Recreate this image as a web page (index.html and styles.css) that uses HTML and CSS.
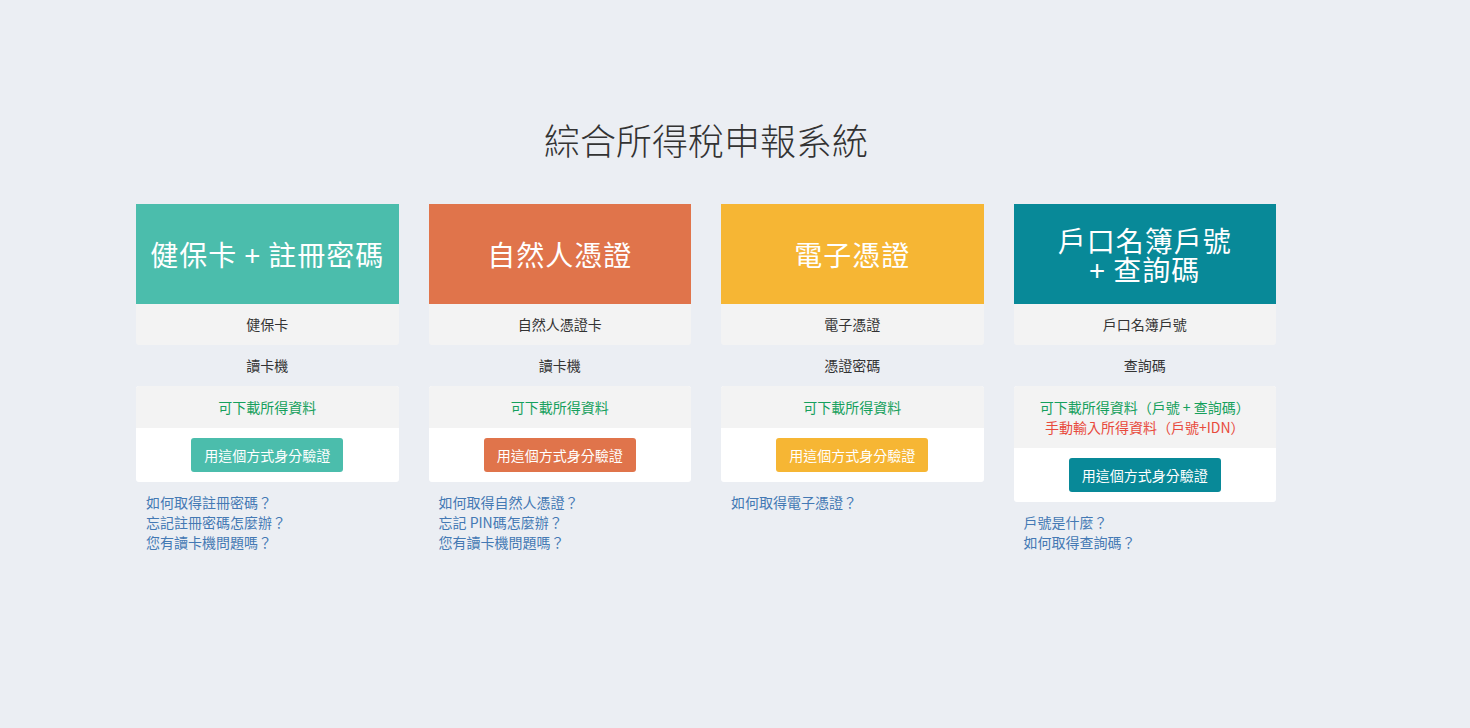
FILE: index.html
```html
<!DOCTYPE html>
<html lang="zh-Hant">
<head>
    <meta charset="UTF-8">
    <meta name="viewport" content="width=device-width, initial-scale=1.0">
    <title>綜合所得稅申報系統</title>
    <link rel="stylesheet" href="styles.css">
</head>
<body>
    <div class="container">
        <h1 class="page-title">綜合所得稅申報系統</h1>

        <div class="methods">
            <!-- 健保卡 -->
            <div class="method">
                <div class="card">
                    <div class="card-head head-nhi">健保卡 + 註冊密碼</div>
                    <div class="item item-gray">健保卡</div>
                    <div class="item">讀卡機</div>
                    <div class="panel">
                        <div class="item item-gray">
                            <span class="ok">可下載所得資料</span>
                        </div>
                        <div class="panel-foot">
                            <button class="btn btn-nhi">用這個方式身分驗證</button>
                        </div>
                    </div>
                </div>
                <ul class="help">
                    <li><a href="#">如何取得註冊密碼？</a></li>
                    <li><a href="#">忘記註冊密碼怎麼辦？</a></li>
                    <li><a href="#">您有讀卡機問題嗎？</a></li>
                </ul>
            </div>

            <!-- 自然人憑證 -->
            <div class="method">
                <div class="card">
                    <div class="card-head head-moica">自然人憑證</div>
                    <div class="item item-gray">自然人憑證卡</div>
                    <div class="item">讀卡機</div>
                    <div class="panel">
                        <div class="item item-gray">
                            <span class="ok">可下載所得資料</span>
                        </div>
                        <div class="panel-foot">
                            <button class="btn btn-moica">用這個方式身分驗證</button>
                        </div>
                    </div>
                </div>
                <ul class="help">
                    <li><a href="#">如何取得自然人憑證？</a></li>
                    <li><a href="#">忘記 PIN碼怎麼辦？</a></li>
                    <li><a href="#">您有讀卡機問題嗎？</a></li>
                </ul>
            </div>

            <!-- 電子憑證 -->
            <div class="method">
                <div class="card">
                    <div class="card-head head-ecert">電子憑證</div>
                    <div class="item item-gray">電子憑證</div>
                    <div class="item">憑證密碼</div>
                    <div class="panel">
                        <div class="item item-gray">
                            <span class="ok">可下載所得資料</span>
                        </div>
                        <div class="panel-foot">
                            <button class="btn btn-ecert">用這個方式身分驗證</button>
                        </div>
                    </div>
                </div>
                <ul class="help">
                    <li><a href="#">如何取得電子憑證？</a></li>
                </ul>
            </div>

            <!-- 戶號 + 查詢碼 -->
            <div class="method">
                <div class="card">
                    <div class="card-head head-household">
                        <span class="head-line">戶口名簿戶號</span>
                        <span class="head-line">+ 查詢碼</span>
                    </div>
                    <div class="item item-gray">戶口名簿戶號</div>
                    <div class="item">查詢碼</div>
                    <div class="panel">
                        <div class="item item-gray">
                            <span class="ok">可下載所得資料（戶號 + 查詢碼）</span><br>
                            <span class="warn">手動輸入所得資料（戶號+IDN）</span>
                        </div>
                        <div class="panel-foot">
                            <button class="btn btn-household">用這個方式身分驗證</button>
                        </div>
                    </div>
                </div>
                <ul class="help">
                    <li><a href="#">戶號是什麼？</a></li>
                    <li><a href="#">如何取得查詢碼？</a></li>
                </ul>
            </div>
        </div>
    </div>
</body>
</html>
```

FILE: styles.css
```css
/* Base */
body {
    margin: 0;
    padding: 0 58px 0 0;
    background: #ebeef3;
    color: #333;
    font-family: "Noto Sans CJK TC", "Noto Sans", "Liberation Sans", sans-serif;
    font-size: 14px;
    line-height: 20px;
}

/* Container */
.container {
    width: 1170px;
    margin: 0 auto;
}

/* Title */
.page-title {
    margin: 118px 0 44px;
    font-size: 36px;
    font-weight: 300;
    line-height: 42px;
    color: #333;
    text-align: center;
}

/* Grid of methods */
.methods {
    display: grid;
    grid-template-columns: repeat(4, 1fr);
}

.method {
    padding: 0 15px;
}

/* Card */
.card {
    text-align: center;
}

.card-head {
    height: 100px;
    display: flex;
    flex-direction: column;
    align-items: center;
    justify-content: center;
    color: #fff;
    font-size: 28px;
    line-height: 30px;
    letter-spacing: 1px;
}

.head-line {
    display: block;
    height: 29px;
}

.head-nhi { background: #4bbdac; }
.head-moica { background: #e0744b; }
.head-ecert { background: #f6b634; }
.head-household { background: #088998; }

.item {
    padding: 10px 10px 11px;
}

.item-gray {
    background: #f3f3f3;
    border-radius: 0 0 3px 3px;
}

/* Panel: result + button */
.panel {
    background: #fff;
    border-radius: 3px;
}

.panel .item-gray {
    padding: 11px 10px;
    border-radius: 3px 3px 0 0;
}

.ok { color: #15a05c; }
.warn { color: #e84a3c; }

.panel-foot {
    padding: 10px;
}

/* Buttons */
.btn {
    padding: 6px 12px;
    font-family: inherit;
    font-size: 14px;
    line-height: 20px;
    color: #fff;
    border: 1px solid transparent;
    border-radius: 3px;
    cursor: pointer;
}

.btn-nhi { background: #4bbdac; }
.btn-moica { background: #e0744b; }
.btn-ecert { background: #f6b634; }
.btn-household { background: #088998; }

/* Help links */
.help {
    list-style: none;
    margin: 10px 0 0;
    padding: 0 0 0 10px;
}

.help a {
    color: #4479b4;
    text-decoration: none;
}
```
